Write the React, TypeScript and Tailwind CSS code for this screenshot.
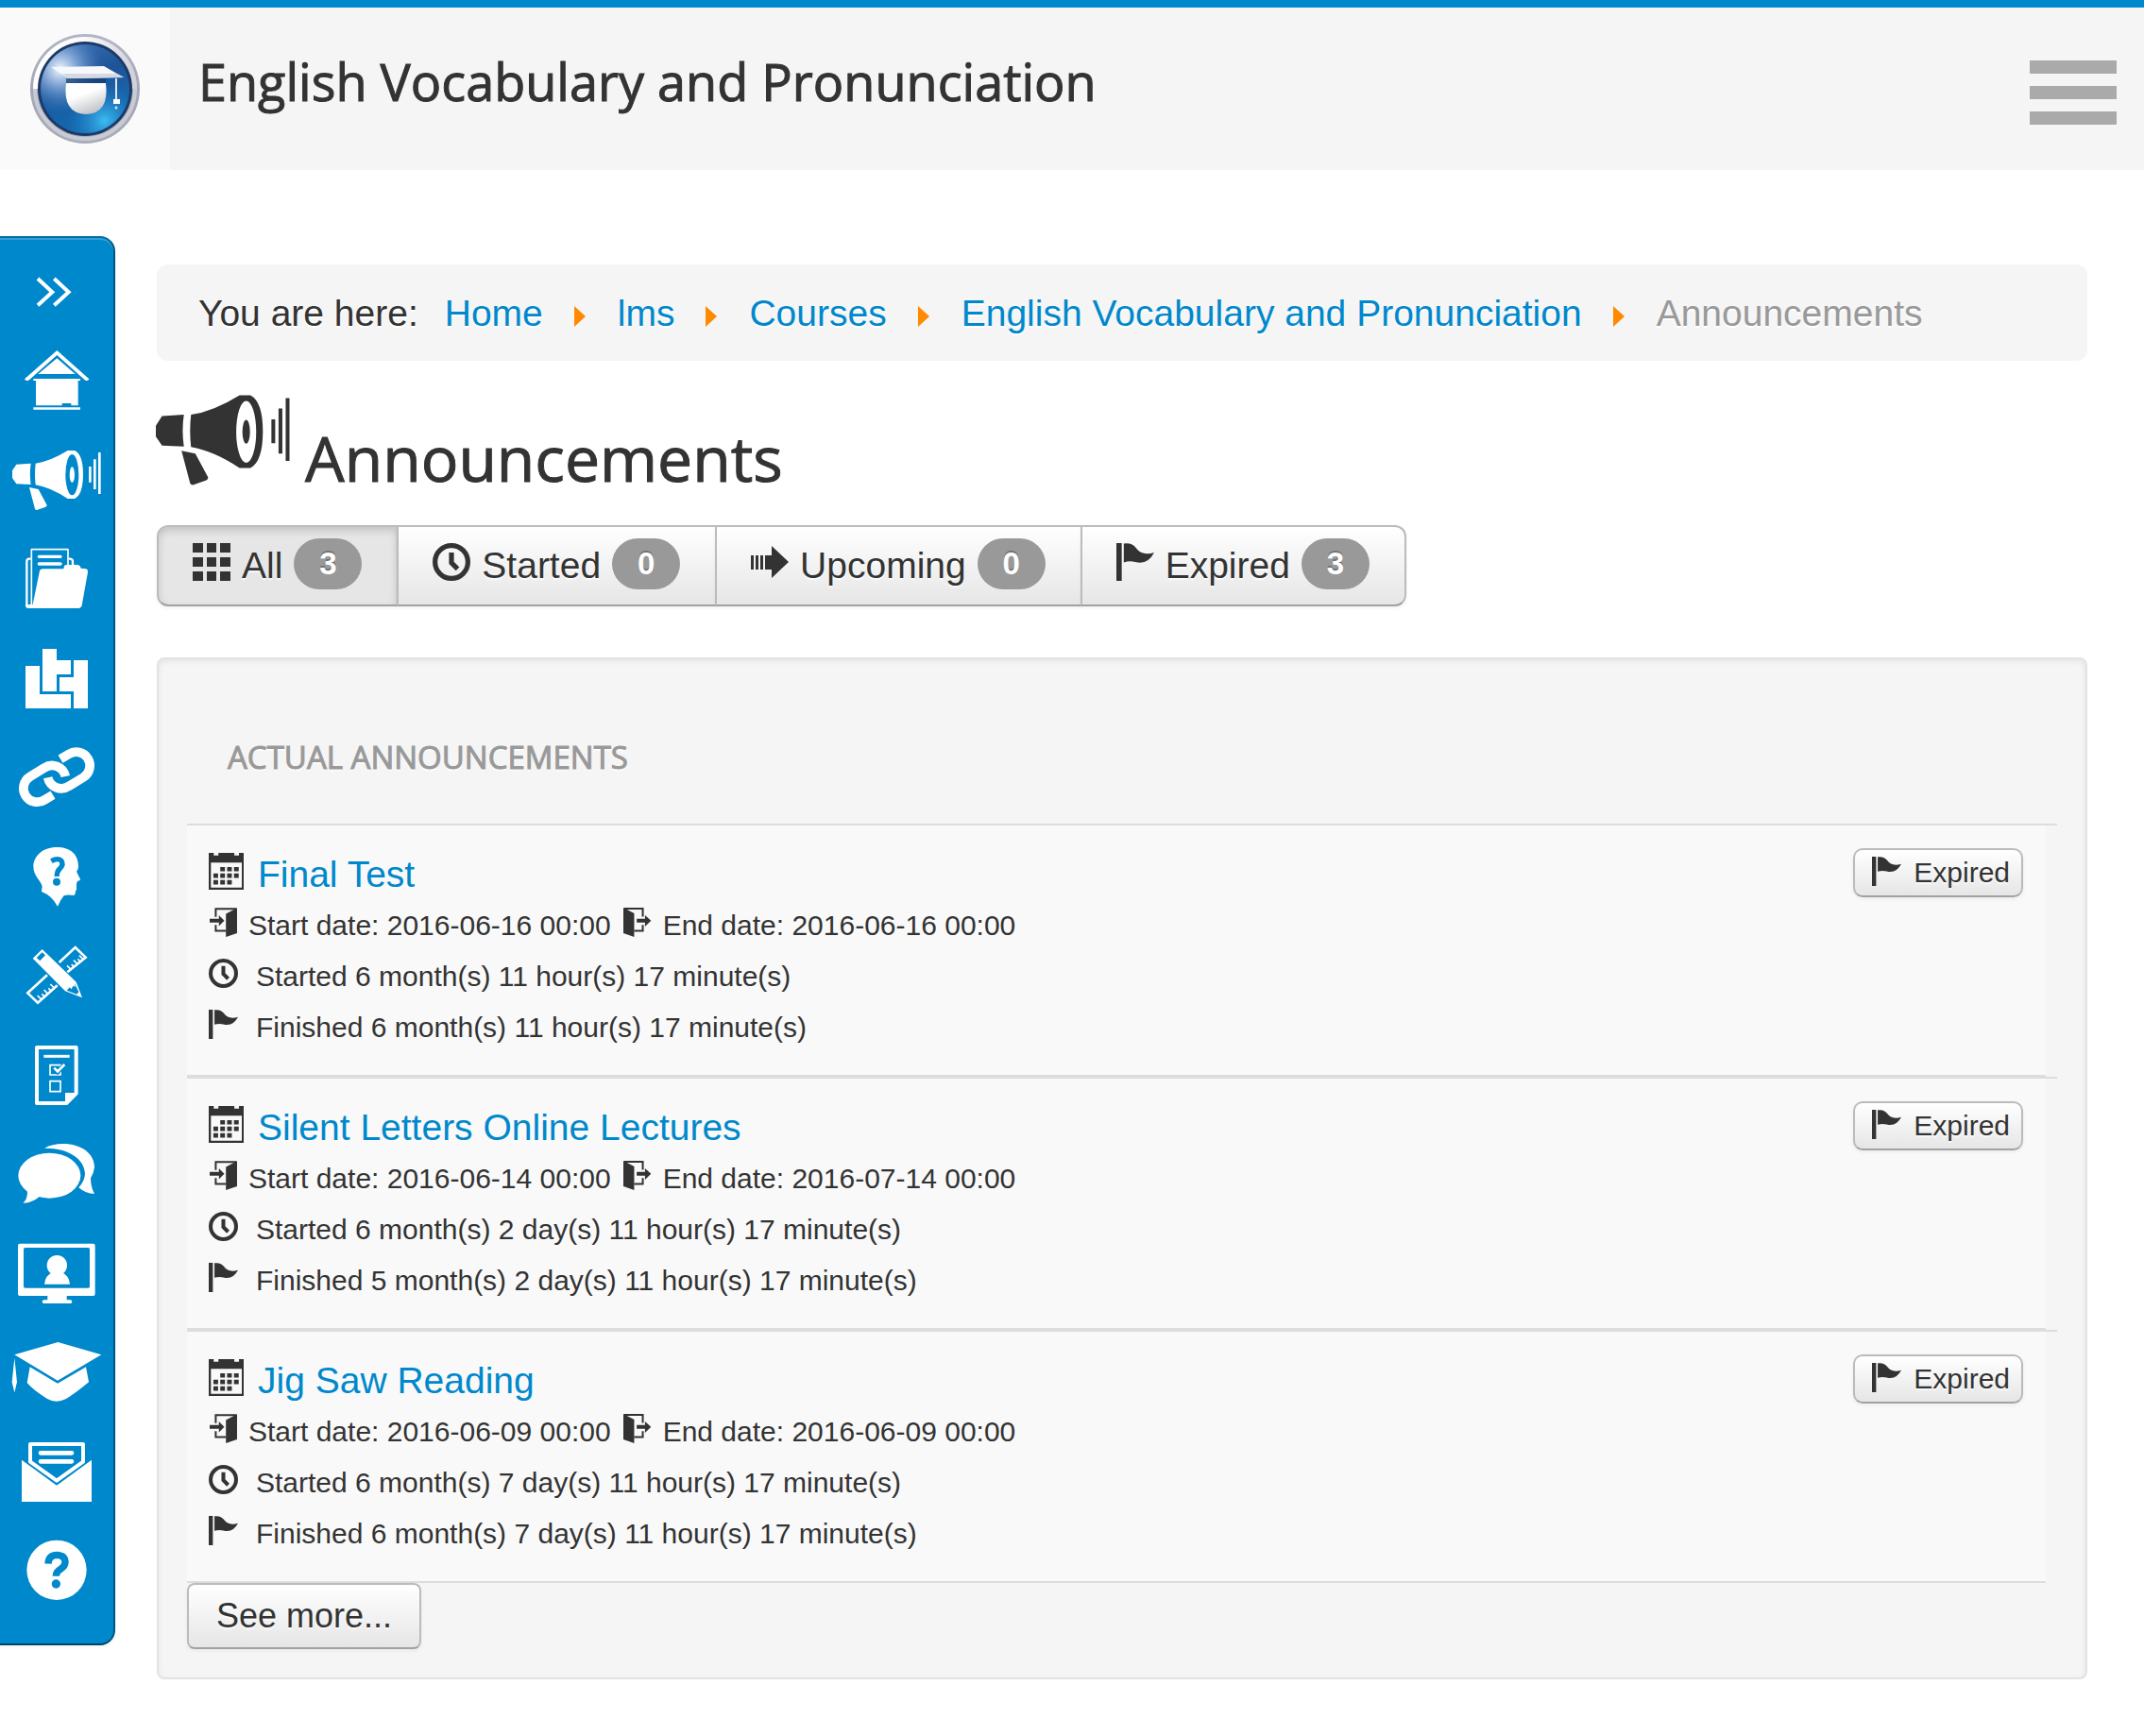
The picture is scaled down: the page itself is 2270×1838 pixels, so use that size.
import React from "react";

type IconProps = { className?: string };

const SMALL_ICON = "shrink-0 fill-current";

function Megaphone() {
  return (
    <>
      <path d="M52 755L98 752Q93 785 98 819L52 817L39 798V775Z" />
      <path
        fillRule="evenodd"
        d="M113 752Q160 745 215 711H238Q264 725 264 787Q264 850 238 864H215Q160 828 113 820Q109 785 113 752ZM208 788a21 65 0 1 0 42 0a21 65 0 1 0-42 0ZM221 788a8 25 0 1 0 16 0a8 25 0 1 0-16 0Z"
      />
      <path d="M93 828L122 834L149 884Q149 888 145 890L117 900Q112 900 111 896Z" />
      <path d="M282 762H290V812H282ZM297 739H305V834H297ZM312 717H320V849H312Z" />
    </>
  );
}

function FlagIcon({ className = "" }: IconProps) {
  return (
    <svg viewBox="0 0 92 92" className={`${SMALL_ICON} ${className}`} aria-hidden="true">
      <path d="M0 0H13V92H0Z" />
      <path d="M18 1Q38-2 48 12Q62 32 92 23Q76 54 46 46Q32 42 18 47Z" />
    </svg>
  );
}

function ClockIcon({ className = "" }: IconProps) {
  return (
    <svg viewBox="0 0 92 92" className={`shrink-0 fill-none stroke-current ${className}`} aria-hidden="true">
      <circle cx="46" cy="46" r="40" strokeWidth="12" />
      <path d="M46 23V48L61 63" strokeWidth="12" />
    </svg>
  );
}

function GridIcon({ className = "" }: IconProps) {
  return (
    <svg viewBox="0 0 40 40" className={`${SMALL_ICON} ${className}`} aria-hidden="true">
      <path d="M0 0h11v10H0zM15 0h10v10H15zM29 0h11v10H29zM0 15h11v10H0zM15 15h10v10H15zM29 15h11v10H29zM0 30h11v10H0zM15 30h10v10H15zM29 30h11v10H29z" />
    </svg>
  );
}

function ArrowIcon({ className = "" }: IconProps) {
  return (
    <svg viewBox="0 0 40 34" className={`${SMALL_ICON} ${className}`} aria-hidden="true">
      <path d="M0 10h3v15H0zM5 10h3v15H5zM10 10h3v15h-3zM15 10H22V0L40 17L22 34V25H15z" />
    </svg>
  );
}

function CalendarIcon({ className = "" }: IconProps) {
  return (
    <svg viewBox="662 117 112 118" className={`${SMALL_ICON} ${className}`} aria-hidden="true">
      <path
        fillRule="evenodd"
        d="M662 117H678V125H693V117H744V125H759V117H774V235H662ZM669 148V228H768V148Z"
      />
      <path d="M699 162h15v14h-15zM721 162h15v14h-15zM743 162h15v14h-15zM677 183h15v14h-15zM699 183h15v14h-15zM721 183h15v14h-15zM743 183h15v14h-15zM677 204h15v14h-15zM699 204h15v14h-15zM721 204h15v14h-15z" />
    </svg>
  );
}

function EnterIcon({ className = "" }: IconProps) {
  return (
    <svg viewBox="665 291 92 92" className={`${SMALL_ICON} ${className}`} aria-hidden="true">
      <path d="M719 310L754 292V371L719 383Z" />
      <path d="M687 320V295H752M687 345V364H719" fill="none" stroke="currentColor" strokeWidth="6" />
      <path d="M668 326H697V315L714 332L697 349V338H668Z" />
    </svg>
  );
}

function ExitIcon({ className = "" }: IconProps) {
  return (
    <svg viewBox="0 0 92 92" className={`${SMALL_ICON} ${className}`} aria-hidden="true">
      <path d="M0 0L34 18V92L0 80Z" />
      <path d="M2 3H61V28M61 54V73H34" fill="none" stroke="currentColor" strokeWidth="6" />
      <path d="M42 35H68V24L87 41L68 59V47H42Z" />
    </svg>
  );
}

const BLUE = "#0088cc";

const navItems: { label: string; box: string; art: React.ReactNode }[] = [
  {
    label: "Home",
    box: "0 327 360 315",
    art: (
      <>
        <path d="M181 393L283 484Q280 491 271 488L181 408L91 488Q81 491 78 484Z" />
        <path d="M181 418L239 468H121Z" />
        <path d="M106 483H255V489H248V568H226V561H197V568H114V489H106ZM106 574H255V581H106Z" />
      </>
    ),
  },
  { label: "Announcements", box: "0 642 360 315", art: <Megaphone /> },
  {
    label: "Documents",
    box: "0 957 360 315",
    art: (
      <>
        <g fill="none" stroke="currentColor">
          <path d="M100 1206V1025H216V1080" strokeWidth="5" strokeLinejoin="round" />
          <path d="M124 1048H192M124 1071H192" strokeWidth="10" strokeLinecap="round" />
          <path d="M98 1055H93Q85 1055 85 1064V1206M218 1055H223Q231 1056 231 1064V1080" strokeWidth="7" />
        </g>
        <path d="M81 1200L104 1200L126 1093Q128 1087 136 1087H202L204 1078Q206 1074 212 1074H248Q256 1076 257 1085L274 1087Q280 1089 279 1097L260 1203Q257 1212 249 1212H89Q81 1211 81 1203Z" />
      </>
    ),
  },
  {
    label: "Modules",
    box: "0 72 360 315",
    art: <path d="M135 141H180V177H225V222H180V276H135ZM81 195H126V285H225V330H81ZM234 177H279V330H234V276H189V231H234Z" />,
  },
  {
    label: "Links",
    box: "0 387 360 315",
    art: (
      <g fill="none" stroke="currentColor" strokeWidth="29">
        <path d="M168 605L141 621A43.5 43.5 0 0 1 95 547L141 519A43.5 43.5 0 0 1 208 546" />
        <path d="M192 491L219 475A43.5 43.5 0 0 1 265 549L219 577A43.5 43.5 0 0 1 152 550" />
      </g>
    ),
  },
  {
    label: "Quizzes",
    box: "0 702 360 315",
    art: (
      <>
        <path d="M180 771C225 771 250 795 249 835Q247 845 243 848L255 873Q255 878 246 878L243 888V905Q238 912 239 919L235 924Q215 920 203 925Q192 938 183 959Q165 925 132 912L134 895C128 875 106 862 106 832C106 800 135 771 180 771Z" />
        <path d="M163 815Q183 804 194 813Q204 826 189 840Q180 849 181 864" fill="none" stroke={BLUE} strokeWidth="16" />
        <circle cx="180" cy="881" r="12" fill={BLUE} />
      </>
    ),
  },
  {
    label: "Exercises",
    box: "0 1017 360 315",
    art: (
      <>
        <g fill="none" stroke="currentColor">
          <path d="M150 1177L88 1234L120 1265L182 1210M188 1137L239 1089L272 1121L214 1168" strokeWidth="8" />
          <path
            d="M133 1256L119 1242M142 1246L133 1237M153 1238L140 1224M163 1228L154 1219M173 1219L160 1206M226 1160L213 1147M235 1151L227 1143M247 1143L234 1130M256 1135L247 1126M265 1128L252 1115"
            strokeWidth="5"
          />
        </g>
        <path d="M134 1095L242 1199L261 1249L207 1228L104 1124Z" />
        <path d="M134 1105L144 1114L127 1132L116 1122Z" fill={BLUE} />
        <path d="M212 1226L221 1216L227 1222L232 1211L239 1215L237 1203L250 1231L244 1238Z" fill={BLUE} />
      </>
    ),
  },
  {
    label: "Surveys",
    box: "0 132 360 315",
    art: (
      <>
        <g fill="none" stroke="currentColor">
          <path d="M117 207H242V353L211 384H117Z" strokeWidth="12" strokeLinejoin="round" />
          <path d="M139 235H221" strokeWidth="9" />
          <path d="M159 263H192V294H159ZM159 314H192V347H159Z" strokeWidth="5" />
        </g>
        <path d="M207 351H247L213 388H207Z" />
        <path d="M172 273L183 284L205 262" fill="none" stroke={BLUE} strokeWidth="15" />
        <path d="M172 272L183 283L205 261" fill="none" stroke="currentColor" strokeWidth="8" />
      </>
    ),
  },
  {
    label: "Forum",
    box: "0 447 360 315",
    art: (
      <>
        <ellipse cx="157" cy="614" rx="99" ry="72" />
        <path d="M87 660Q88 690 73 701Q100 702 126 680Z" />
        <path d="M141 527Q165 513 200 513C260 513 300 545 300 588Q298 605 288 622Q288 650 300 672Q272 672 250 652Q270 630 270 607C268 560 215 525 141 527Z" />
      </>
    ),
  },
  {
    label: "Conferences",
    box: "0 762 360 315",
    art: (
      <>
        <path
          fillRule="evenodd"
          d="M63 830H296Q302 830 302 836V990Q302 996 296 996H63Q57 996 57 990V836Q57 830 63 830ZM80 843Q75 843 75 848V966Q75 971 80 971H280Q285 971 285 966V848Q285 843 280 843Z"
        />
        <path d="M151 995H212V1009H224Q229 1010 229 1015Q229 1020 224 1020H139Q134 1020 134 1015Q134 1010 139 1009H151Z" />
        <circle cx="181" cy="899" r="32" />
        <path d="M141 959Q143 932 166 922H197Q220 932 222 959Z" />
      </>
    ),
  },
  {
    label: "Grades",
    box: "0 -3 360 315",
    art: (
      <>
        <path d="M184 63L322 103L183 185L46 103Z" />
        <path d="M95 142L183 194L273 142L282 190Q240 225 210 243Q178 259 150 243Q105 215 86 192Z" />
        <path d="M46 113L54 190L46 223L38 190Z" />
      </>
    ),
  },
  {
    label: "Messages",
    box: "0 312 360 315",
    art: (
      <>
        <path d="M96 443V387H264V443L180 503Z" fill="none" stroke="currentColor" strokeWidth="12" strokeLinejoin="round" />
        <path d="M129 415H228M129 442H228" stroke="currentColor" strokeWidth="14" strokeLinecap="round" />
        <path d="M69 437L180 518L291 437V570H69Z" />
      </>
    ),
  },
  {
    label: "Help",
    box: "0 627 360 315",
    art: (
      <>
        <circle cx="180" cy="787" r="95" />
        <path
          d="M153 767Q154 740 180 739Q207 740 207 762Q207 775 192 784Q178 792 178 806"
          fill="none"
          stroke={BLUE}
          strokeWidth="22"
        />
        <circle cx="178" cy="831" r="14" fill={BLUE} />
      </>
    ),
  },
];

function Logo() {
  return (
    <svg viewBox="0 0 116 116" className="size-[116px]" aria-hidden="true">
      <defs>
        <linearGradient id="ring" x1="0" y1="0" x2="0" y2="1">
          <stop offset="0" stopColor="#b4b6c4" />
          <stop offset="0.5" stopColor="#a3a7b8" />
          <stop offset="1" stopColor="#a9acb9" />
        </linearGradient>
        <linearGradient id="shine" x1="0" y1="0" x2="1" y2="0">
          <stop offset="0" stopColor="#ffffff" />
          <stop offset="0.5" stopColor="#fafafc" />
          <stop offset="1" stopColor="#cfd0d8" />
        </linearGradient>
        <linearGradient id="disc" x1="0" y1="0" x2="0.4" y2="1">
          <stop offset="0" stopColor="#3f74b8" />
          <stop offset="0.5" stopColor="#1d5397" />
          <stop offset="1" stopColor="#1a6fb5" />
        </linearGradient>
        <radialGradient id="gleam" cx="0.22" cy="0.28" r="0.5">
          <stop offset="0" stopColor="#f4f9ff" />
          <stop offset="0.4" stopColor="#8fb1de" stopOpacity="0.8" />
          <stop offset="1" stopColor="#3f74b8" stopOpacity="0" />
        </radialGradient>
        <radialGradient id="glow" cx="0.72" cy="0.86" r="0.42">
          <stop offset="0" stopColor="#3cbcf0" />
          <stop offset="1" stopColor="#1f7cc4" stopOpacity="0" />
        </radialGradient>
        <linearGradient id="face" x1="0" y1="0" x2="0.5" y2="1">
          <stop offset="0.45" stopColor="#ffffff" />
          <stop offset="1" stopColor="#c4c6ca" />
        </linearGradient>
      </defs>
      <circle cx="58" cy="58" r="58" fill="url(#ring)" />
      <circle cx="58" cy="58" r="53" fill="none" stroke="#c9cbd4" strokeWidth="4" />
      <path d="M3 58A55 55 0 0 1 113 58L106 58A48 48 0 0 0 10 58Z" fill="url(#shine)" />
      <circle cx="58" cy="58" r="50" fill="#1d3a66" />
      <circle cx="58" cy="58" r="47" fill="url(#disc)" />
      <path d="M11 58A47 47 0 0 0 105 58Z" fill="#0e62ab" fillOpacity="0.35" />
      <circle cx="58" cy="58" r="47" fill="url(#glow)" />
      <circle cx="58" cy="58" r="47" fill="url(#gleam)" />
      <path d="M38 47H80V54H38Z" fill="#123a6e" fillOpacity="0.7" />
      <path d="M38 52H80Q84 84 59 85Q34 84 38 52Z" fill="url(#face)" />
      <path d="M22 35L78 34L99 46L40 47Z" fill="#f6f8fb" />
      <path d="M34 42L92 42L99 46L40 47Z" fill="#d5dae2" />
      <path d="M90 47V69H92V47Z" fill="#dfe8f2" />
      <path d="M88 69H95V74H88Z" fill="#fff" />
      <circle cx="91" cy="78" r="1.5" fill="#cfe6f7" />
    </svg>
  );
}

const BUTTON =
  "border-2 border-[#bbbbbb] border-b-[#a2a2a2] bg-linear-to-b from-white to-[#e6e6e6] shadow-[inset_0_2px_0_rgba(255,255,255,0.2),0_2px_4px_rgba(0,0,0,0.05)] text-shadow-[0_2px_2px_rgba(255,255,255,0.75)]";

const crumbs = ["Home", "lms", "Courses", "English Vocabulary and Pronunciation"];

const tabs = [
  { label: "All", count: 3, icon: <GridIcon className="mb-2 size-10" /> },
  { label: "Started", count: 0, icon: <ClockIcon className="mb-2 size-10" /> },
  { label: "Upcoming", count: 0, icon: <ArrowIcon className="mb-2 h-[34px] w-10" /> },
  { label: "Expired", count: 3, icon: <FlagIcon className="mb-2 size-10" /> },
];

const announcements = [
  {
    title: "Final Test",
    start: "2016-06-16 00:00",
    end: "2016-06-16 00:00",
    started: "Started 6 month(s) 11 hour(s) 17 minute(s)",
    finished: "Finished 6 month(s) 11 hour(s) 17 minute(s)",
  },
  {
    title: "Silent Letters Online Lectures",
    start: "2016-06-14 00:00",
    end: "2016-07-14 00:00",
    started: "Started 6 month(s) 2 day(s) 11 hour(s) 17 minute(s)",
    finished: "Finished 5 month(s) 2 day(s) 11 hour(s) 17 minute(s)",
  },
  {
    title: "Jig Saw Reading",
    start: "2016-06-09 00:00",
    end: "2016-06-09 00:00",
    started: "Started 6 month(s) 7 day(s) 11 hour(s) 17 minute(s)",
    finished: "Finished 6 month(s) 7 day(s) 11 hour(s) 17 minute(s)",
  },
];

function Header() {
  return (
    <header className="flex items-start border-t-8 border-[#0088cc] bg-[#f5f5f5]">
      <a href="#" aria-label="Site home" className="flex h-[172px] w-[180px] shrink-0 items-center justify-center bg-[#fafafa]">
        <Logo />
      </a>
      <h1 className="mt-[46px] ml-[30px] font-['Open_Sans',sans-serif] text-[54px] leading-[64px] [-webkit-text-stroke:1px_#333333]">
        English Vocabulary and Pronunciation
      </h1>
      <button type="button" aria-label="Menu" className="mt-14 mr-[29px] ml-auto flex w-[92px] flex-col gap-[13px]">
        <span className="h-[14px] bg-[#aaaaaa]" />
        <span className="h-[14px] bg-[#aaaaaa]" />
        <span className="h-[14px] bg-[#aaaaaa]" />
      </button>
    </header>
  );
}

function Sidebar() {
  return (
    <nav
      aria-label="Course tools"
      className="mt-[70px] w-[122px] shrink-0 rounded-r-2xl border-y-2 border-r-2 border-t-[#006da3] border-r-[#005580] border-b-[#004466] bg-[#0088cc] pb-[26px] text-white shadow-[inset_0_2px_0_rgba(255,255,255,0.2),0_2px_4px_rgba(0,0,0,0.05)]"
    >
      <button type="button" aria-label="Expand" className="block h-[97px] w-full">
        <svg viewBox="0 36 360 291" className="h-[97px] w-[120px] fill-none stroke-current">
          <path d="M120 165L166 208L120 250M172 165L218 208L172 250" strokeWidth="12" />
        </svg>
      </button>
      <ul>
        {navItems.map((item) => (
          <li key={item.label}>
            <a href="#" aria-label={item.label} className="block">
              <svg viewBox={item.box} className="h-[105px] w-[120px] fill-current" aria-hidden="true">
                {item.art}
              </svg>
            </a>
          </li>
        ))}
      </ul>
    </nav>
  );
}

function Breadcrumb() {
  return (
    <nav aria-label="Breadcrumb" className="rounded-xl bg-[#f5f5f5] px-11 text-shadow-[0_2px_0_#ffffff]">
      <ol className="flex h-[102px] items-center pt-[3px] whitespace-nowrap">
        <li className="mr-7">You are here:</li>
        {crumbs.map((crumb) => (
          <li key={crumb} className="flex items-center">
            <a href="#" className="text-[#0088cc]">
              {crumb}
            </a>
            <svg viewBox="0 0 12 22" className="mr-[34px] ml-[33px] mt-1 h-[22px] w-3" aria-hidden="true">
              <path d="M0 0L12 11L0 22Z" fill="#ff8a00" />
            </svg>
          </li>
        ))}
        <li className="text-[#999999]">Announcements</li>
      </ol>
    </nav>
  );
}

function Tabs() {
  return (
    <div className="mt-8 flex">
      {tabs.map((tab, i) => (
        <button
          key={tab.label}
          type="button"
          aria-pressed={i === 0}
          className={`-ml-[2px] flex h-[86px] items-center gap-3 pr-[37px] pl-9 first:ml-0 first:rounded-l-xl last:rounded-r-xl ${BUTTON} ${
            i === 0 ? "bg-[#e6e6e6] bg-none shadow-[inset_0_4px_8px_rgba(0,0,0,0.15),0_2px_4px_rgba(0,0,0,0.05)]" : ""
          }`}
        >
          {tab.icon}
          <span>{tab.label}</span>
          <span className="mb-1 h-[54px] w-[72px] rounded-full bg-[#999999] text-[33px] leading-[54px] font-bold text-white text-shadow-[0_-2px_0_rgba(0,0,0,0.25)]">
            {tab.count}
          </span>
        </button>
      ))}
    </div>
  );
}

function AnnouncementRow({ item }: { item: (typeof announcements)[number] }) {
  return (
    <li className="border-t-2 border-[#dddddd] pr-3">
      <div className="flex items-start justify-between border-b-2 border-[#dddddd] bg-[#f9f9f9] pr-6 pb-[23px] pl-[23px]">
        <div className="pt-[25px] text-[30px] leading-[54px]">
          <h4 className="flex items-start gap-[15px] text-[39px]">
            <CalendarIcon className="mt-1 h-[39px] w-[37px]" />
            <a href="#" className="text-[#0088cc]">
              {item.title}
            </a>
          </h4>
          <p className="flex items-start">
            <EnterIcon className="mt-2 mr-[11px] size-[31px]" />
            Start date: {item.start}
            <ExitIcon className="mt-2 mr-[11px] ml-[13px] size-[31px]" />
            End date: {item.end}
          </p>
          <p className="flex items-start gap-[19px]">
            <ClockIcon className="mt-2 size-[31px]" />
            {item.started}
          </p>
          <p className="flex items-start gap-[19px]">
            <FlagIcon className="mt-2 size-[31px]" />
            {item.finished}
          </p>
        </div>
        <button
          type="button"
          className={`mt-6 flex items-center gap-[13px] rounded-[10px] pr-3 pl-[18px] text-[30px] leading-[48px] ${BUTTON}`}
        >
          <FlagIcon className="mb-1 size-[31px]" />
          Expired
        </button>
      </div>
    </li>
  );
}

export default function App() {
  return (
    <div className="min-h-screen bg-white font-['Liberation_Sans',Arial,sans-serif] text-[39px] text-[#333333]">
      <Header />
      <div className="flex items-start">
        <Sidebar />
        <main className="mt-[100px] mr-[60px] ml-11 min-w-0 flex-1 pb-[60px]">
          <Breadcrumb />
          <h2 className="mt-9 flex items-start gap-4 font-['Open_Sans',sans-serif] text-[66px] leading-[80px] [-webkit-text-stroke:1px_#333333]">
            <svg viewBox="39 711 282 189" className="-ml-px h-24 w-[142px] fill-current stroke-none" aria-hidden="true">
              <Megaphone />
            </svg>
            <span className="mt-[26px]">Announcements</span>
          </h2>
          <Tabs />
          <section className="mt-[54px] rounded-lg border-2 border-[#e3e3e3] bg-[#f5f5f5] p-[30px] shadow-[inset_0_2px_6px_rgba(0,0,0,0.08)]">
            <h3 className="mt-[54px] mb-[50px] ml-[43px] font-['Open_Sans',sans-serif] text-[33px] leading-10 text-[#999999] uppercase [-webkit-text-stroke:1px_#999999] text-shadow-[0_2px_0_#ffffff]">
              Actual announcements
            </h3>
            <ul>
              {announcements.map((item) => (
                <AnnouncementRow key={item.title} item={item} />
              ))}
            </ul>
            <button type="button" className={`block rounded-lg px-[29px] text-[36px] leading-[66px] ${BUTTON}`}>
              See more...
            </button>
          </section>
        </main>
      </div>
    </div>
  );
}
